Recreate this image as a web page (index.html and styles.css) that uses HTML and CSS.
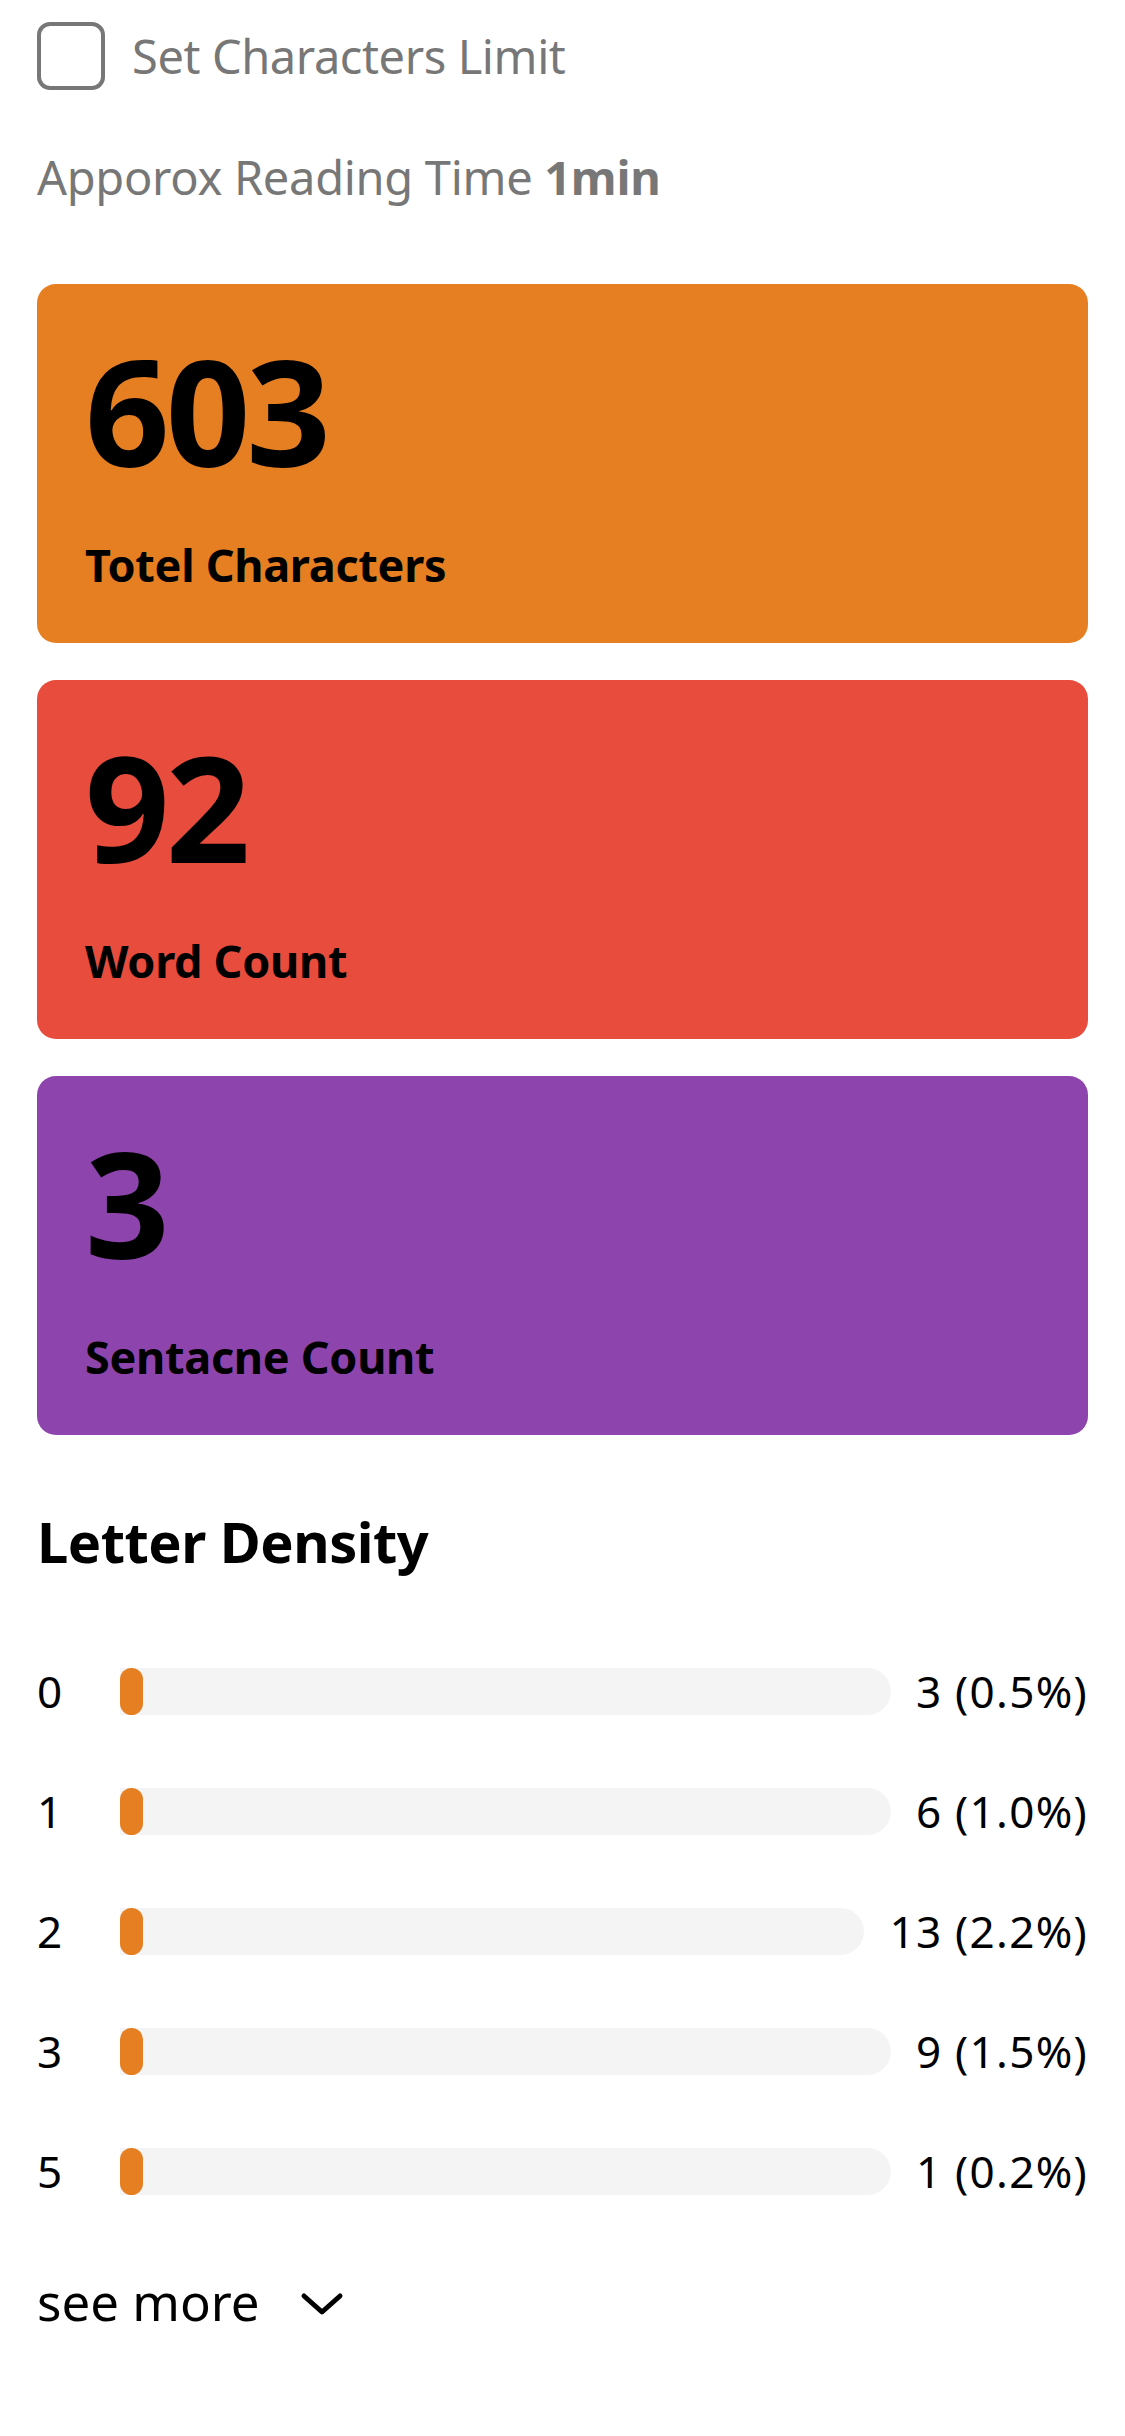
FILE: index.html
```html
<!DOCTYPE html>
<html lang="en">
<head>
<meta charset="utf-8">
<title>Text Stats</title>
<link rel="stylesheet" href="styles.css">
</head>
<body>
<main class="page">
  <label class="check-row">
    <span class="checkbox"></span>
    <span class="check-label">Set Characters Limit</span>
  </label>
  <p class="reading">Apporox Reading Time <b>1min</b></p>

  <section class="cards">
    <div class="card card-orange">
      <div class="card-num">603</div>
      <div class="card-label">Totel Characters</div>
    </div>
    <div class="card card-red">
      <div class="card-num">92</div>
      <div class="card-label">Word Count</div>
    </div>
    <div class="card card-purple">
      <div class="card-num">3</div>
      <div class="card-label">Sentacne Count</div>
    </div>
  </section>

  <h2 class="density-title">Letter Density</h2>
  <ul class="density">
    <li class="row"><span class="row-key">0</span><span class="bar"><span class="fill"></span></span><span class="row-val">3 (0.5%)</span></li>
    <li class="row"><span class="row-key">1</span><span class="bar"><span class="fill"></span></span><span class="row-val">6 (1.0%)</span></li>
    <li class="row"><span class="row-key">2</span><span class="bar"><span class="fill"></span></span><span class="row-val">13 (2.2%)</span></li>
    <li class="row"><span class="row-key">3</span><span class="bar"><span class="fill"></span></span><span class="row-val">9 (1.5%)</span></li>
    <li class="row"><span class="row-key">5</span><span class="bar"><span class="fill"></span></span><span class="row-val">1 (0.2%)</span></li>
  </ul>

  <button class="see-more">see more
    <svg class="chev" viewBox="0 0 44 24" width="44" height="24"><path d="M4 4 L22 20 L40 4" fill="none" stroke="#000" stroke-width="5" stroke-linecap="round" stroke-linejoin="round"/></svg>
  </button>
</main>
</body>
</html>
```
FILE: styles.css
```css
* { box-sizing: border-box; }
html, body { margin: 0; padding: 0; background: #fff; }
body {
  font-family: "Noto Sans", "Open Sans", sans-serif;
  color: #000;
}
.page {
  width: 1125px;
  padding: 22px 37px 60px 37px;
}
.check-row {
  display: flex;
  align-items: center;
  gap: 27px;
  height: 68px;
}
.checkbox {
  width: 68px;
  height: 68px;
  border: 4px solid #777;
  border-radius: 13px;
  flex: none;
}
.check-label {
  font-size: 47px;
  color: #777;
  line-height: 68px;
  letter-spacing: -0.4px;
}
.reading {
  margin: 57px 0 0 0;
  font-size: 47px;
  line-height: 60px;
  color: #777;
  letter-spacing: -0.3px;
}
.reading b { font-weight: 700; }

.cards {
  margin-top: 77px;
  display: flex;
  flex-direction: column;
  gap: 37px;
}
.card {
  height: 359px;
  border-radius: 19px;
  padding: 51px 50px 0 48px;
}
.card-orange { background: #e67e22; }
.card-red { background: #e74c3c; }
.card-purple { background: #8e44ad; }
.card-num {
  font-size: 148px;
  font-weight: 700;
  line-height: 150px;
  letter-spacing: -4px;
}
.card-label {
  margin-top: 50px;
  font-size: 45px;
  font-weight: 700;
  line-height: 60px;
  letter-spacing: -0.3px;
}

.density-title {
  margin: 66px 0 0 0;
  font-size: 56px;
  font-weight: 700;
  line-height: 80px;
  letter-spacing: -0.5px;
}
.density {
  list-style: none;
  margin: 87px 0 0 0;
  padding: 0;
  display: flex;
  flex-direction: column;
  gap: 73px;
}
.row {
  display: flex;
  align-items: center;
  height: 47px;
}
.row-key {
  width: 83px;
  flex: none;
  font-size: 44px;
  line-height: 47px;
}
.bar {
  flex: 1;
  height: 47px;
  background: #f4f4f4;
  border-radius: 0 24px 24px 0;
  position: relative;
}
.fill {
  display: block;
  width: 23px;
  height: 47px;
  background: #e67e22;
  border-radius: 12px;
}
.row-val {
  margin-left: 25px;
  font-size: 44px;
  line-height: 47px;
  white-space: nowrap;
  letter-spacing: 1.3px;
}
.see-more {
  margin-top: 76px;
  display: flex;
  align-items: center;
  gap: 40px;
  padding: 0;
  border: 0;
  background: none;
  font-family: inherit;
  font-size: 51px;
  line-height: 60px;
  color: #000;
}
.chev { display: block; margin-top: 6px; }
```
